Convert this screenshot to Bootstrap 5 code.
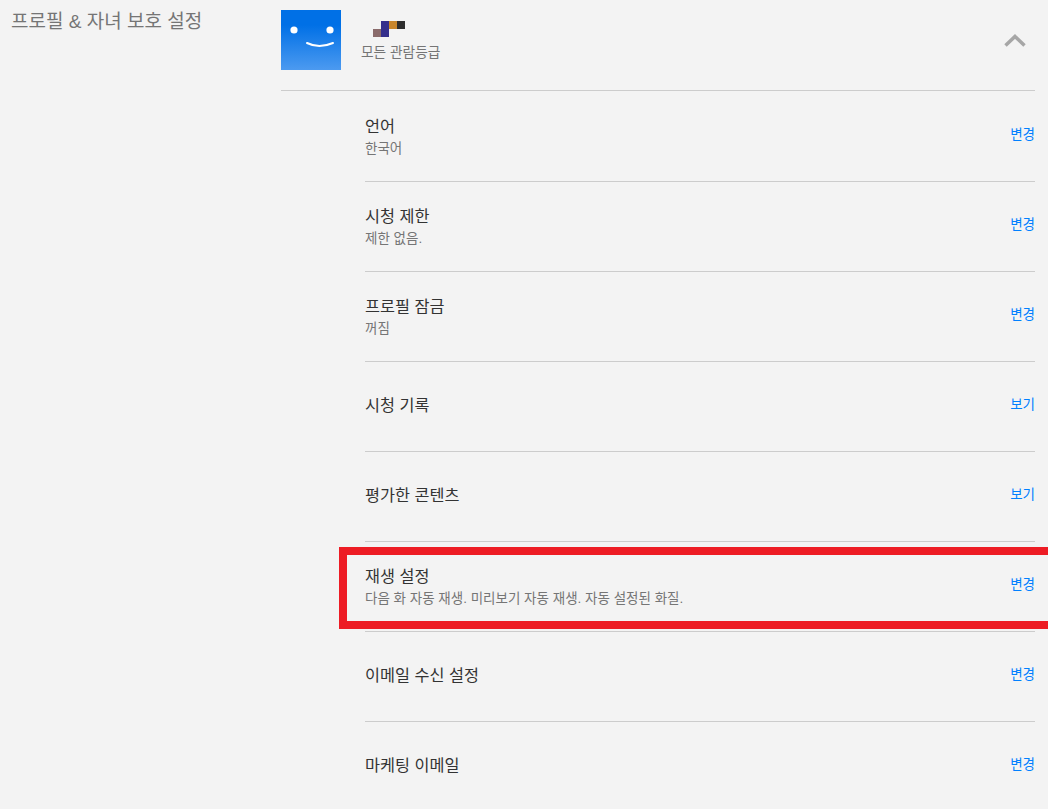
<!DOCTYPE html>
<html lang="ko">
<head>
<meta charset="UTF-8">
<title>프로필 & 자녀 보호 설정</title>
<link href="https://cdn.jsdelivr.net/npm/bootstrap@5.3.2/dist/css/bootstrap.min.css" rel="stylesheet">
<style>
html, body { height: 809px; overflow: hidden; }
body { background: #f3f3f3; color: #333; font-family: "Liberation Sans", "Noto Sans CJK KR", sans-serif; }
.side-title { width: 281px; padding: 11px 0 0 11px; font-size: 19px; line-height: 22px; color: #757575; }
.main-col { width: 754px; }
.profile-head { height: 91px; padding-top: 10px; border-bottom: 1px solid #ccc; }
.avatar { width: 60px; height: 60px; background: linear-gradient(#0070e6 25%, #4c9af0); }
.profile-info { margin-left: 20px; }
.pixel-name { display: block; margin-top: 11px; }
.rating { font-size: 13.7px; line-height: 18px; color: #757575; margin-top: 7px; }
.chev { margin: 23px 8px 0 auto; }
.set-list { margin-left: 84px; margin-top: 1px; }
.set-row { height: 90px; padding-bottom: 4px; border-bottom: 1px solid #ccc; }
.set-row:last-child { border-bottom: 0; }
.set-name { font-size: 16.3px; line-height: 22px; color: #333; }
.set-sub { font-size: 13.5px; line-height: 20px; margin-top: 2px; margin-bottom: -5px; color: #757575; }
.set-link { font-size: 13.5px; line-height: 18px; color: #0080ff; text-decoration: none; }
.red-box { position: absolute; left: 339px; top: 547px; width: 720px; height: 82px; border: 8px solid #ed1c24; }
</style>
</head>
<body>
<div class="d-flex">
  <div class="side-title">프로필 &amp; 자녀 보호 설정</div>
  <div class="main-col">
    <div class="profile-head d-flex align-items-start">
      <svg class="avatar" viewBox="0 0 60 60">
        <circle cx="13" cy="20" r="3.6" fill="#fff"/>
        <circle cx="49" cy="20" r="3.6" fill="#fff"/>
        <path d="M26 33Q38 39 52 33" fill="none" stroke="#fff" stroke-width="2" stroke-linecap="round"/>
      </svg>
      <div class="profile-info">
        <svg class="pixel-name" width="44" height="16" viewBox="0 0 44 16">
          <rect x="12" y="8" width="8" height="8" fill="#8a6b6b"/>
          <rect x="20" y="0" width="8" height="16" fill="#352f8c"/>
          <rect x="28" y="0" width="8" height="8" fill="#c8862c"/>
          <rect x="36" y="0" width="8" height="8" fill="#2d2d2d"/>
        </svg>
        <div class="rating">모든 관람등급</div>
      </div>
      <svg class="chev" width="24" height="14" viewBox="0 0 24 14">
        <path d="M2.500 12.500L12 3.500L21.500 12.500" fill="none" stroke="#a6a6a6" stroke-width="3.500"/>
      </svg>
    </div>
    <div class="set-list" id="rows"></div>
  </div>
</div>
<div class="red-box"></div>
<script>
const rows = [
  ["언어", "한국어", "변경"],
  ["시청 제한", "제한 없음.", "변경"],
  ["프로필 잠금", "꺼짐", "변경"],
  ["시청 기록", "", "보기"],
  ["평가한 콘텐츠", "", "보기"],
  ["재생 설정", "다음 화 자동 재생. 미리보기 자동 재생. 자동 설정된 화질.", "변경"],
  ["이메일 수신 설정", "", "변경"],
  ["마케팅 이메일", "", "변경"]
];
document.getElementById("rows").innerHTML = rows.map(r => `
  <div class="set-row d-flex justify-content-between align-items-center">
    <div>
      <div class="set-name">${r[0]}</div>
      ${r[1] ? `<div class="set-sub">${r[1]}</div>` : ""}
    </div>
    <a class="set-link" href="#">${r[2]}</a>
  </div>`).join("");
</script>
</body>
</html>
